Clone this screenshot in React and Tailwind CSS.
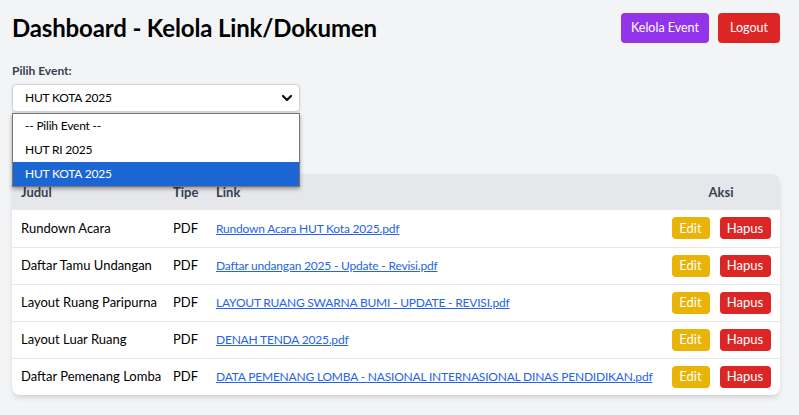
import React from "react";

const rows = [
  ["Rundown Acara", "Rundown Acara HUT Kota 2025.pdf"],
  ["Daftar Tamu Undangan", "Daftar undangan 2025 - Update - Revisi.pdf"],
  ["Layout Ruang Paripurna", "LAYOUT RUANG SWARNA BUMI - UPDATE - REVISI.pdf"],
  ["Layout Luar Ruang", "DENAH TENDA 2025.pdf"],
  ["Daftar Pemenang Lomba", "DATA PEMENANG LOMBA - NASIONAL INTERNASIONAL DINAS PENDIDIKAN.pdf"],
];

export default function App() {
  return (
    <div className="min-h-[415px] bg-[#f3f4f6] pl-3 pr-[19px] pt-3 text-black" style={{ fontFamily: 'Lato, sans-serif' }}>
      <div className="flex items-center justify-between">
        <h1 className="text-[24px] font-bold leading-8 tracking-[-0.15px]">Dashboard - Kelola Link/Dokumen</h1>
        <div className="flex gap-[9px]">
          <button className="h-[30px] w-[88px] rounded bg-[#9333ea] text-[12.5px] text-white">Kelola Event</button>
          <button className="h-[30px] w-[62px] rounded bg-[#dc2626] text-[12.5px] text-white">Logout</button>
        </div>
      </div>

      <div className="relative mt-[19px]">
        <label className="block text-[12px] font-bold leading-4 text-[#374151]">Pilih Event:</label>
        <div className="mt-[5px] flex h-[28px] w-[288px] items-center justify-between rounded border border-[#d1d5db] bg-white pl-3 pr-[4px] text-[12px] tracking-[-0.2px] shadow-sm">
          <span>HUT KOTA 2025</span>
          <svg width="12" height="12" viewBox="0 0 12 12" className="mr-[2px]">
            <path d="M2 4 L6 8 L10 4" fill="none" stroke="#111" strokeWidth="2.2" strokeLinecap="round" strokeLinejoin="round" />
          </svg>
        </div>
        <div className="absolute left-0 top-[50px] z-10 w-[288px] border border-[#767676] bg-white text-[12px] tracking-[-0.2px] shadow-[0_2px_4px_rgba(0,0,0,0.35)]">
          <div className="flex h-[24px] items-center pl-3">-- Pilih Event --</div>
          <div className="flex h-[24px] items-center pl-3">HUT RI 2025</div>
          <div className="flex h-[24px] items-center bg-[#1b66d2] pl-3 text-white">HUT KOTA 2025</div>
        </div>
      </div>

      <div className="mt-[62px] overflow-hidden rounded-lg bg-white shadow-md">
        <table className="w-full table-fixed border-collapse text-[13px]">
          <colgroup>
            <col className="w-[152px]" />
            <col className="w-[43px]" />
            <col />
            <col className="w-[118px]" />
          </colgroup>
          <thead>
            <tr className="h-[36px] bg-[#e5e7eb] text-left text-[#374151]">
              <th className="px-[9px] pt-[2px] font-bold">Judul</th>
              <th className="px-[9px] pt-[2px] font-bold">Tipe</th>
              <th className="px-[9px] pt-[2px] font-bold">Link</th>
              <th className="px-[9px] pt-[2px] text-center font-bold">Aksi</th>
            </tr>
          </thead>
          <tbody>
            {rows.map(([t, l], i) => (
              <tr key={i} className={`h-[37px] ${i < rows.length - 1 ? "border-b border-[#e5e7eb]" : ""}`}>
                <td className="whitespace-nowrap px-[9px]">{t}</td>
                <td className="px-[9px]">PDF</td>
                <td className="whitespace-nowrap px-[9px]">
                  <a href="#" className="text-[12px] tracking-[-0.2px] text-[#2563eb] underline">{l}</a>
                </td>
                <td className="px-[9px]">
                  <div className="flex justify-center gap-[10px]">
                    <button className="h-[22px] w-[38px] rounded bg-[#eab308] text-white">Edit</button>
                    <button className="h-[22px] w-[51px] rounded bg-[#dc2626] text-white">Hapus</button>
                  </div>
                </td>
              </tr>
            ))}
          </tbody>
        </table>
      </div>
    </div>
  );
}
